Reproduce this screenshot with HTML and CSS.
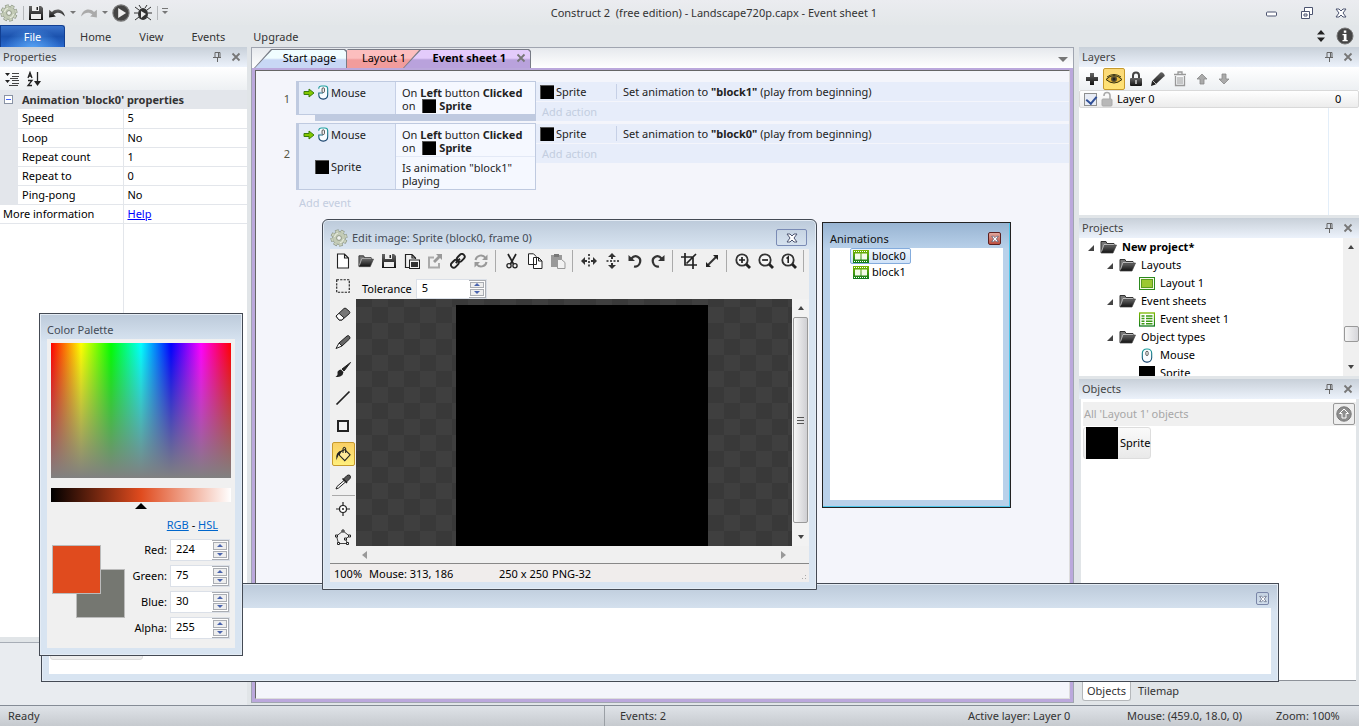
FILE: index.html
```html
<!DOCTYPE html>
<html lang="en">
<head>
<meta charset="utf-8">
<title>Construct 2 - Event sheet 1</title>
<link rel="stylesheet" href="styles.css">
</head>
<body>
<svg class="defs" aria-hidden="true">
  <defs>
    <linearGradient id="dark" x1="0" y1="0" x2="0" y2="1"><stop offset="0" stop-color="#666"/><stop offset="1" stop-color="#111"/></linearGradient>
    <linearGradient id="green" x1="0" y1="0" x2="0" y2="1"><stop offset="0" stop-color="#7ab800"/><stop offset="1" stop-color="#0f7a1c"/></linearGradient>
    <linearGradient id="mouseline" x1="0" y1="0" x2="0" y2="1"><stop offset="0" stop-color="#1fa3a0"/><stop offset="1" stop-color="#173f6b"/></linearGradient>
    <symbol id="gear" viewBox="0 0 18 18"><path d="M9 9m-7 0a7 7 0 1014 0 7 7 0 10-14 0" fill="none" stroke="#7d8675" stroke-width="3" stroke-dasharray="3.500 2"/><circle cx="9" cy="9" r="6.500" fill="#c3cbb6" stroke="#8d9684" stroke-width=".8"/><path d="M9 9m-7 0a7 7 0 1014 0 7 7 0 10-14 0" fill="none" stroke="#c9d1bd" stroke-width="2" stroke-dasharray="3 2.500" stroke-dashoffset="-.2"/><circle cx="9" cy="9" r="2.400" fill="#f2f4f0" stroke="#7d8675" stroke-width=".8"/><path d="M4.500 8q.5-3 3.500-4M13.500 10q-.5 3-3.500 4" stroke="#eef2e6" fill="none"/></symbol>
    <symbol id="save" viewBox="0 0 16 16"><path d="M1 1h12l2 2v12H1z" fill="url(#dark)"/><path d="M4 1h7v5H4zM3 9h10v5H3z" fill="#eee"/><path d="M8.500 2h1.500v3H8.500z" fill="#222"/></symbol>
    <symbol id="undo" viewBox="0 0 16 16"><path d="M1 5v7l6-1-2-1.600C8 7 11 7 15 11 14 5 8 3 3.500 7z" fill="url(#dark)"/></symbol>
    <symbol id="redo" viewBox="0 0 16 16"><path d="M15 5v7l-6-1 2-1.600C8 7 5 7 1 11 2 5 8 3 12.500 7z" fill="#aaa"/></symbol>
    <symbol id="play" viewBox="0 0 16 16"><circle cx="8" cy="8" r="7.200" fill="#444" stroke="#777"/><path d="M5.500 3.500L12.500 8l-7 4.500z" fill="#eee"/></symbol>
    <symbol id="bug" viewBox="0 0 18 18"><path d="M5 6L1 3M13 6l4-3M4 9H0M14 9h4M5 13l-4 3M13 13l4 3M7 4L5 1M11 4l2-3" stroke="#333" fill="none"/><ellipse cx="9" cy="10" rx="5" ry="6" fill="#333"/><path d="M7 7l5 3-5 4z" fill="#eee"/></symbol>
    <symbol id="pin" viewBox="0 0 10 12"><path d="M3 1.500h5v5H3zM1 6.500h8M5.500 7v4M6.500 1.500v5" stroke="#666" fill="none"/></symbol>
    <symbol id="x" viewBox="0 0 10 10"><path d="M1.500 1.500l7 7M8.500 1.500l-7 7" stroke="#777" stroke-width="1.800"/></symbol>
    <symbol id="glyphx" viewBox="0 0 12 10"><path d="M1 1h3l2 2 2-2h3L8 5l3 4H8L6 7 4 9H1l3-4z" fill="#fff" stroke="#4c5470"/></symbol>
    <symbol id="cat" viewBox="0 0 16 16"><path d="M1 2h5L3.500 5zM1 9h5l-2.500 3z" fill="#222"/><path d="M8 2.500h7M8 5.500h7M8 9.500h7M8 12.500h7M5 14.500h9M6 7.500h8" stroke="#444"/></symbol>
    <symbol id="sort" viewBox="0 0 16 16"><path d="M2 7l2-5.500L6 7M2.500 5h3M2 9.500h4l-4 5h4M11.500 1v12" stroke="#222" fill="none" stroke-width="1.300"/><path d="M8 10h7l-3.500 5z" fill="#222"/></symbol>
    <symbol id="mouse" viewBox="0 0 12 16"><rect x="1" y="1" width="10" height="14" rx="4.500" fill="#f9fcff" stroke="url(#mouseline)" stroke-width="1.200"/><rect x="4.800" y="3.500" width="2.400" height="4.500" rx="1.200" fill="#fff" stroke="#333" stroke-width=".9"/></symbol>
    <symbol id="mousesm" viewBox="0 0 12 16"><path d="M1.500 4Q1.500 1 4.500 1H8q3 0 3 3v6.500Q11 15 6.300 15 1.500 15 1.500 10.500V8.500H6" fill="#f9fcff" stroke="url(#mouseline)" stroke-width="1.200"/><rect x="5" y="3" width="2.500" height="5" rx="1.200" fill="#fff" stroke="#333" stroke-width=".9"/></symbol>
    <symbol id="go" viewBox="0 0 12 10"><path d="M1 3.500h5V1l5 4-5 4V6.500H1z" fill="#83c800" stroke="#3a7d0c"/></symbol>
    <symbol id="plus" viewBox="0 0 14 14"><path d="M5 1h4v4h4v4H9v4H5V9H1V5h4z" fill="url(#dark)"/></symbol>
    <symbol id="eye" viewBox="0 0 18 12"><path d="M1 6.500q8-8 16 0-8 7-16 0z" fill="#e7b83b" stroke="#35300f"/><circle cx="9" cy="6" r="3" fill="#5a5030"/><circle cx="9" cy="6" r="1.500" fill="#222"/><path d="M2 4q7-5 14 0" fill="none" stroke="#35300f"/></symbol>
    <symbol id="lock" viewBox="0 0 14 16"><path d="M4 7V4.500a3 3 0 016 0V7" fill="none" stroke="#444" stroke-width="2"/><rect x="1" y="7" width="12" height="8" rx="1" fill="url(#dark)"/><path d="M6.200 9h1.600v4H6.200z" fill="#ccc"/></symbol>
    <symbol id="unlock" viewBox="0 0 12 16"><path d="M3 5V4.500a3 3 0 016 0V8" fill="none" stroke="#aaa" stroke-width="1.600"/><rect x="1" y="8" width="10" height="7" rx="1" fill="#b8b8b8" stroke="#aaa"/></symbol>
    <symbol id="pencil" viewBox="0 0 16 16"><path d="M2 10L10.500 1.500q2-1 3.500 1.500t0 2.500L5.500 13.500 1 15z" fill="url(#dark)"/><path d="M2.500 9.500l4 4" stroke="#ddd" stroke-width=".8"/></symbol>
    <symbol id="trash" viewBox="0 0 14 16"><path d="M1 3.500h12M5 3V1h4v2M2.500 5v9.500h9V5" fill="none" stroke="#999" stroke-width="1.300"/><path d="M5 6v7M7 6v7M9 6v7" stroke="#999"/></symbol>
    <symbol id="arrup" viewBox="0 0 12 12"><path d="M6 1l5 5H8v5H4V6H1z" fill="#aaa" stroke="#888" stroke-width=".8"/></symbol>
    <symbol id="folder" viewBox="0 0 17 14"><path d="M1 12.500V1.500h5l1 2h7V5" fill="#777" stroke="#333"/><path d="M1 13L4 5h12.500L13 13z" fill="url(#dark)" stroke="#444" stroke-width=".7"/><path d="M1.500 11.500L4 4.500h10" fill="none" stroke="#ddd" stroke-width=".7"/></symbol>
    <symbol id="layout" viewBox="0 0 16 13"><rect x=".5" y=".5" width="15" height="12" fill="#f7fbe8" stroke="#2c8a1f"/><rect x="2.500" y="2.500" width="11" height="8" fill="#9bc832" stroke="#5d9c1e"/></symbol>
    <symbol id="sheet" viewBox="0 0 16 14"><rect x=".5" y=".5" width="15" height="13" fill="#fff" stroke="url(#green)" stroke-width="1.300"/><path d="M2.500 2.700h3v1.500h-3zM7 2.700h6.500v1.500H7zM2.500 5.300h3v1.500h-3zM7 5.300h6.500v1.500H7zM2.500 7.900h3v1.500h-3zM7 7.900h6.500v1.500H7zM2.500 10.400h3v1.500h-3zM7 10.400h6.500v1.500H7z" fill="#3c9a15"/></symbol>
    <symbol id="film" viewBox="0 0 16 13"><rect width="16" height="13" fill="url(#green)"/><path d="M2 3.500h5.500v6H2zM8.500 3.500H14v6H8.500z" fill="#f4fbe8"/><path d="M1 1.500h14M1 11.500h14" stroke="#fff" stroke-dasharray="1 1"/></symbol>
    <symbol id="new" viewBox="0 0 16 16"><path d="M2.500 1h7l4 4v10h-11zM9.500 1v4h4" fill="#fff" stroke="#222" stroke-width="1.100"/></symbol>
    <symbol id="copyimg" viewBox="0 0 16 16"><path d="M5 14.500H1.500v-13H8l3.500 3.500V6M8 1.500V5h3.500" fill="none" stroke="#222" stroke-width="1.200"/><rect x="5.500" y="7" width="10" height="8.500" fill="#f5f5f5" stroke="#222"/><rect x="7" y="9" width="7" height="5" fill="#333"/></symbol>
    <symbol id="export" viewBox="0 0 16 16"><path d="M7 4.500H2v10h10V10" fill="none" stroke="#aaa" stroke-width="2"/><path d="M9 1h6v6l-2-2-5 5-2-2 5-5z" fill="#999"/></symbol>
    <symbol id="link" viewBox="0 0 16 16"><g fill="none" stroke="#222" stroke-width="1.900" transform="rotate(-45 8 8)"><rect x="-.5" y="5" width="8.500" height="5.500" rx="2.700"/><rect x="8" y="5" width="8.500" height="5.500" rx="2.700"/><path d="M5 7.800h6"/></g></symbol>
    <symbol id="refresh" viewBox="0 0 16 16"><path d="M2.500 7a5.500 5.500 0 0110-2M13.500 9a5.500 5.500 0 01-10 2" fill="none" stroke="#999" stroke-width="2"/><path d="M14.500 1.500V7H9zM1.500 14.500V9H7z" fill="#999"/></symbol>
    <symbol id="cut" viewBox="0 0 16 16"><path d="M4 1l5.500 10M12 1L6.500 11" stroke="#222" stroke-width="1.700"/><circle cx="5" cy="12.800" r="2.100" fill="none" stroke="#222" stroke-width="1.300"/><circle cx="11" cy="12.800" r="2.100" fill="none" stroke="#222" stroke-width="1.300"/></symbol>
    <symbol id="copy" viewBox="0 0 16 16"><path d="M1.500.800h5l3 3v7.700h-8zM6.500 4.500h5l3.500 3.500v7.500H6.500zM11.500 4.500V8H15" fill="#fff" stroke="#222"/></symbol>
    <symbol id="paste" viewBox="0 0 16 16"><path d="M1 2h11v12H1z" fill="#999"/><path d="M4 1h5v3H4z" fill="#777"/><path d="M7.500 6.500h4l3.500 3v6H7.500z" fill="#f2f2f2" stroke="#999"/></symbol>
    <symbol id="fliph" viewBox="0 0 16 16"><path d="M8 1v14" stroke="#222" stroke-width="1.600" stroke-dasharray="2 1.500"/><path d="M0 8l4-4v3h2v2H4v3zM16 8l-4-4v3h-2v2h2v3z" fill="#333"/></symbol>
    <symbol id="rotl" viewBox="0 0 16 16"><path d="M4.500 5.500C8 1 14.500 4 13 9.500c-.8 3-3.500 4.500-6 4" fill="none" stroke="#333" stroke-width="2.200"/><path d="M1.500 2v6H8z" fill="#333"/></symbol>
    <symbol id="crop" viewBox="0 0 16 16"><path d="M4 0v12h12M0 4h12v12M5.500 10.500L15 1" fill="none" stroke="#222" stroke-width="1.700"/></symbol>
    <symbol id="resize" viewBox="0 0 16 16"><path d="M4 12l8-8" stroke="#333" stroke-width="2"/><path d="M9 2h5v5zM2 9v5h5z" fill="#222"/></symbol>
    <symbol id="zoom" viewBox="0 0 16 16"><circle cx="7" cy="7" r="5.700" fill="#f6f6f6" stroke="#333" stroke-width="1.800"/><path d="M11 11l4 4" stroke="#222" stroke-width="2.800"/></symbol>
    <symbol id="select" viewBox="0 0 14 14"><rect x="1.500" y="1.500" width="11" height="11" fill="none" stroke="#222" stroke-dasharray="2 1"/></symbol>
    <symbol id="eraser" viewBox="0 0 16 16"><path d="M1 10l8-7.500q1-.7 2 0l3.500 3q.7 1 0 2L7 14H4z" fill="#777" stroke="#222"/><path d="M1 10l3-2.700 5 4.500L7 14H4z" fill="#fff" stroke="#222"/></symbol>
    <symbol id="pencil2" viewBox="0 0 16 16"><path d="M4 9L12 2q1.500-1 2.500.5t0 2.500L7 12z" fill="#666" stroke="#222"/><path d="M4 9l3 3-6 2.500z" fill="#fff" stroke="#222"/></symbol>
    <symbol id="brush" viewBox="0 0 16 16"><path d="M15.500.5L7 7l2 2z" fill="#222" stroke="#222"/><path d="M6 7.500l2.500 2.500-1 3Q4 16 .5 14.500q2.500-1 2-3.500T6 7.500z" fill="#222"/></symbol>
    <symbol id="line" viewBox="0 0 16 16"><path d="M1.500 14.500l13-13" stroke="#222" stroke-width="1.700"/></symbol>
    <symbol id="rect" viewBox="0 0 16 16"><rect x="3" y="3" width="10" height="10" fill="none" stroke="#222" stroke-width="2"/></symbol>
    <symbol id="bucket" viewBox="0 0 18 18"><path d="M5 7l6-3 6 6-6 6.500-6-6z" fill="#ffe99a" stroke="#222" stroke-width="1.200"/><path d="M9 8V3q1.500-3 3 0v5" fill="none" stroke="#222" stroke-width="1.200"/><path d="M1.500 16Q0 6 8 5L5.500 9.500 4 10z" fill="#222"/></symbol>
    <symbol id="picker" viewBox="0 0 16 16"><path d="M8.500 5l3.500-3.500q2-1 3 0t0 3L11.500 8z" fill="#555" stroke="#222"/><path d="M9 6.500L2 12.500l-1 2.500 2.500-1L10.500 8" fill="#fff" stroke="#222"/><path d="M7.500 4.500l4.500 4.500" stroke="#222" stroke-width="1.500"/></symbol>
    <symbol id="origin" viewBox="0 0 16 16"><circle cx="8" cy="8" r="3.500" fill="#fff" stroke="#222" stroke-width="1.200"/><path d="M8 1v4M8 11v4M1 8h4M11 8h4" stroke="#222" stroke-width="1.200"/><circle cx="8" cy="8" r="1" fill="#222"/></symbol>
    <symbol id="poly" viewBox="0 0 16 16"><path d="M1.500 7L8 2l6.500 5-4 3 2 4.500h-9z" fill="none" stroke="#444"/><g fill="#fff" stroke="#222"><path d="M.5 6h2v2h-2zM7 1h2v2H7zM13.500 6h2v2h-2zM9.500 9h2v2h-2zM2.500 13.500h2v2h-2zM11.500 13.500h2v2h-2z"/></g></symbol>
    <symbol id="info" viewBox="0 0 18 18"><circle cx="9" cy="9" r="8" fill="#444" stroke="#777"/><path d="M7.800 3.500h2.500v2.300H7.800zM6.500 7h4v6h1.200v1.200H6.500V13h1.300V8.300H6.500z" fill="#fff"/></symbol>
    <symbol id="upcirc" viewBox="0 0 16 16"><circle cx="8" cy="8" r="7.200" fill="#8e8e8e" stroke="#777"/><path d="M8 3l4.500 4.500H10V12H6V7.500H3.500z" fill="none" stroke="#fff"/></symbol>
  </defs>
</svg>

<div class="app">
  <header class="titlebar">
    <nav class="quick" aria-label="Quick access">
      <svg class="i18"><use href="#gear"/></svg><span class="vsep"></span>
      <button class="flat" aria-label="Save"><svg class="i16"><use href="#save"/></svg></button>
      <button class="flat" aria-label="Undo"><svg class="i18"><use href="#undo"/></svg></button><span class="caret"></span>
      <button class="flat" aria-label="Redo"><svg class="i18"><use href="#redo"/></svg></button><span class="caret"></span>
      <button class="flat" aria-label="Run layout"><svg class="i18"><use href="#play"/></svg></button>
      <button class="flat" aria-label="Debug layout"><svg class="i18"><use href="#bug"/></svg></button><span class="vsep"></span><span class="caret lined"></span>
    </nav>
    <h1 class="apptitle">Construct 2&nbsp; (free edition) - Landscape720p.capx - Event sheet 1</h1>
    <div class="wincontrols">
      <button class="flat" aria-label="Minimize"><svg class="i14" viewBox="0 0 14 14"><rect x="1.500" y="6" width="10" height="4" rx="1" fill="#fff" stroke="#4c5470"/></svg></button>
      <button class="flat" aria-label="Restore"><svg class="i14" viewBox="0 0 14 14"><path d="M4.500 1.500h8v7h-8z" fill="#fff" stroke="#4c5470"/><path d="M1.500 5.500h8v7h-8z" fill="#fff" stroke="#4c5470"/><path d="M4 8h3v2H4z" fill="none" stroke="#4c5470"/></svg></button>
      <button class="flat" aria-label="Close"><svg class="i12"><use href="#glyphx"/></svg></button>
    </div>
  </header>
  <nav class="ribbon">
    <button class="file">File</button>
    <button class="rtab">Home</button><button class="rtab">View</button><button class="rtab">Events</button><button class="rtab">Upgrade</button>
    <div class="ribbonend"><svg width="10" height="14" viewBox="0 0 10 14"><path d="M1 5.500L5 1l4 4.500zM1 8.500L5 13l4-4.500z" fill="#222"/></svg><button class="flat" aria-label="About"><svg class="i18"><use href="#info"/></svg></button></div>
  </nav>

  <main class="workspace">
    <aside class="left">
      <section class="props">
        <header class="panelhead"><h2>Properties</h2><svg class="pin"><use href="#pin"/></svg><button class="flat" aria-label="Close Properties"><svg class="i10"><use href="#x"/></svg></button></header>
        <div class="tools proptools"><button class="flat" aria-label="Categorized"><svg class="i16"><use href="#cat"/></svg></button><button class="flat" aria-label="Sort"><svg class="i16"><use href="#sort"/></svg></button></div>
        <table class="proptable">
          <colgroup><col class="c1"><col class="c2"><col></colgroup>
          <thead><tr><th colspan="3"><span class="minus"></span>Animation 'block0' properties</th></tr></thead>
          <tbody>
            <tr><td class="gut"></td><td>Speed</td><td class="v">5</td></tr>
            <tr><td class="gut"></td><td>Loop</td><td class="v">No</td></tr>
            <tr><td class="gut"></td><td>Repeat count</td><td class="v">1</td></tr>
            <tr><td class="gut"></td><td>Repeat to</td><td class="v">0</td></tr>
            <tr><td class="gut"></td><td>Ping-pong</td><td class="v">No</td></tr>
            <tr><td class="more" colspan="2">More information</td><td class="v"><a href="#help">Help</a></td></tr>
          </tbody>
        </table>
        <div class="propfill"></div>
      </section>
      <div class="propdesc"></div>
    </aside>

    <section class="center">
      <div class="tabs">
        <button class="tab start"><span>Start page</span></button>
        <button class="tab layout"><span>Layout 1</span></button>
        <button class="tab sheet"><span>Event sheet 1</span><svg class="i10"><use href="#x"/></svg></button>
        <span class="caret tabmenu"></span>
      </div>
      <div class="sheetframe"><div class="sheetbody">
        <div class="event">
          <div class="num">1</div>
          <div class="conds">
            <div class="block">
              <div class="cond"><div class="obj"><svg class="go"><use href="#go"/></svg><svg class="mouse"><use href="#mousesm"/></svg>Mouse</div><div class="desc">On <b>Left</b> button <b>Clicked</b><br>on <i class="sq"></i><b>Sprite</b></div></div>
            </div>
            <div class="foot"></div>
          </div>
          <div class="acts">
            <div class="act"><div class="aobj"><i class="sq"></i>Sprite</div><div class="adesc">Set animation to <b>"block1"</b> (play from beginning)</div></div>
            <div class="addact">Add action</div>
          </div>
        </div>
        <div class="event">
          <div class="num">2</div>
          <div class="conds">
            <div class="block">
              <div class="cond"><div class="obj"><svg class="go"><use href="#go"/></svg><svg class="mouse"><use href="#mousesm"/></svg>Mouse</div><div class="desc">On <b>Left</b> button <b>Clicked</b><br>on <i class="sq"></i><b>Sprite</b></div></div>
              <div class="cond"><div class="obj sp"><i class="sq"></i>Sprite</div><div class="desc">Is animation "block1"<br>playing</div></div>
            </div>
          </div>
          <div class="acts">
            <div class="act"><div class="aobj"><i class="sq"></i>Sprite</div><div class="adesc">Set animation to <b>"block0"</b> (play from beginning)</div></div>
            <div class="addact">Add action</div>
          </div>
        </div>
        <div class="addevent">Add event</div>
      </div></div>
    </section>

    <aside class="right">
      <section class="layers">
        <header class="panelhead"><h2>Layers</h2><svg class="pin"><use href="#pin"/></svg><button class="flat" aria-label="Close Layers"><svg class="i10"><use href="#x"/></svg></button></header>
        <div class="tools layertools">
          <button class="flat" aria-label="Add layer"><svg class="i14"><use href="#plus"/></svg></button>
          <button class="flat on" aria-label="Toggle visible"><svg width="18" height="12"><use href="#eye"/></svg></button>
          <button class="flat" aria-label="Lock"><svg width="14" height="16"><use href="#lock"/></svg></button>
          <button class="flat" aria-label="Rename"><svg class="i16"><use href="#pencil"/></svg></button>
          <button class="flat" aria-label="Delete"><svg width="14" height="16"><use href="#trash"/></svg></button>
          <button class="flat" aria-label="Move up"><svg class="i12"><use href="#arrup"/></svg></button>
          <button class="flat" aria-label="Move down"><svg class="i12 flip"><use href="#arrup"/></svg></button>
        </div>
        <div class="layer"><input type="checkbox" id="l0" checked><svg width="12" height="16"><use href="#unlock"/></svg><label for="l0">Layer 0</label><span class="lnum">0</span></div>
        <div class="layerfill"></div>
      </section>
      <section class="projects">
        <header class="panelhead"><h2>Projects</h2><svg class="pin"><use href="#pin"/></svg><button class="flat" aria-label="Close Projects"><svg class="i10"><use href="#x"/></svg></button></header>
        <div class="treebox">
          <ul class="tree">
            <li class="d0"><i class="open"></i><svg class="fold"><use href="#folder"/></svg><b>New project*</b></li>
            <li class="d1"><i class="open"></i><svg class="fold"><use href="#folder"/></svg>Layouts</li>
            <li class="d2"><svg class="leaf"><use href="#layout"/></svg>Layout 1</li>
            <li class="d1"><i class="open"></i><svg class="fold"><use href="#folder"/></svg>Event sheets</li>
            <li class="d2"><svg class="leaf"><use href="#sheet"/></svg>Event sheet 1</li>
            <li class="d1"><i class="open"></i><svg class="fold"><use href="#folder"/></svg>Object types</li>
            <li class="d2"><svg class="leaf"><use href="#mouse"/></svg>Mouse</li>
            <li class="d2"><i class="leaf black"></i>Sprite</li>
          </ul>
          <div class="vscroll"><i class="up"></i><i class="knob"></i><i class="down"></i></div>
        </div>
      </section>
      <section class="objects">
        <header class="panelhead"><h2>Objects</h2><svg class="pin"><use href="#pin"/></svg><button class="flat" aria-label="Close Objects"><svg class="i10"><use href="#x"/></svg></button></header>
        <div class="objbody">
          <div class="filter"><span>All 'Layout 1' objects</span><button class="upbtn" aria-label="Up one level"><svg class="i16"><use href="#upcirc"/></svg></button></div>
          <button class="objitem"><i></i>Sprite</button>
        </div>
        <div class="btabs"><button class="active">Objects</button><button>Tilemap</button></div>
      </section>
    </aside>
  </main>

  <footer class="status"><span class="ready">Ready</span><span class="events">Events: 2</span><span>Active layer: Layer 0</span><span>Mouse: (459.0, 18.0, 0)</span><span>Zoom: 100%</span></footer>
</div>

<section class="win framewin" aria-label="Animation frames">
  <div class="wtitle"><h2></h2><button class="wx" aria-label="Close"><svg class="i8"><use href="#glyphx"/></svg></button></div>
  <div class="wbody"><i class="frameitem"></i></div>
</section>

<section class="win palette">
  <div class="wtitle"><h2>Color Palette</h2></div>
  <div class="wbody">
    <div class="spectrum"></div>
    <div class="ramp"></div><i class="marker"></i>
    <div class="modes"><a href="#rgb">RGB</a> - <a href="#hsl">HSL</a></div>
    <div class="mix">
      <div class="swatches"><i class="back"></i><i class="fore"></i></div>
      <div class="channels">
        <label for="r">Red:</label><div class="spin"><input id="r" type="text" value="224"><span><button aria-label="Red up"></button><button aria-label="Red down"></button></span></div>
        <label for="g">Green:</label><div class="spin"><input id="g" type="text" value="75"><span><button aria-label="Green up"></button><button aria-label="Green down"></button></span></div>
        <label for="b">Blue:</label><div class="spin"><input id="b" type="text" value="30"><span><button aria-label="Blue up"></button><button aria-label="Blue down"></button></span></div>
        <label for="a">Alpha:</label><div class="spin"><input id="a" type="text" value="255"><span><button aria-label="Alpha up"></button><button aria-label="Alpha down"></button></span></div>
      </div>
    </div>
  </div>
</section>

<section class="win editor">
  <div class="wtitle"><svg class="i18"><use href="#gear"/></svg><h2>Edit image: Sprite (block0, frame 0)</h2><button class="wide" aria-label="Close"><svg class="i12"><use href="#glyphx"/></svg></button></div>
  <div class="wbody">
    <div class="etools">
      <button aria-label="New"><svg><use href="#new"/></svg></button><button aria-label="Open"><svg><use href="#folder"/></svg></button><button aria-label="Save"><svg><use href="#save"/></svg></button><button aria-label="Save all"><svg><use href="#copyimg"/></svg></button><button aria-label="Export"><svg><use href="#export"/></svg></button><button aria-label="Link"><svg><use href="#link"/></svg></button><button aria-label="Reload"><svg><use href="#refresh"/></svg></button><i></i>
      <button aria-label="Cut"><svg><use href="#cut"/></svg></button><button aria-label="Copy"><svg><use href="#copy"/></svg></button><button aria-label="Paste"><svg><use href="#paste"/></svg></button><i></i>
      <button aria-label="Mirror"><svg><use href="#fliph"/></svg></button><button aria-label="Flip"><svg class="quarter"><use href="#fliph"/></svg></button><button aria-label="Rotate left"><svg><use href="#rotl"/></svg></button><button aria-label="Rotate right"><svg class="mirror"><use href="#rotl"/></svg></button><i></i>
      <button aria-label="Crop"><svg><use href="#crop"/></svg></button><button aria-label="Resize"><svg><use href="#resize"/></svg></button><i></i>
      <button aria-label="Zoom in"><svg viewBox="0 0 16 16"><use href="#zoom"/><path d="M4 7h6M7 4v6" stroke="#222" stroke-width="1.700"/></svg></button><button aria-label="Zoom out"><svg viewBox="0 0 16 16"><use href="#zoom"/><path d="M4 7h6" stroke="#222" stroke-width="1.700"/></svg></button><button aria-label="Actual size"><svg viewBox="0 0 16 16"><use href="#zoom"/><path d="M5.500 5.500L7.200 4v6" fill="none" stroke="#222" stroke-width="1.600"/></svg></button><i></i>
    </div>
    <div class="emain">
      <div class="side">
        <button aria-label="Select"><svg><use href="#select"/></svg></button><button aria-label="Eraser"><svg><use href="#eraser"/></svg></button><button aria-label="Pencil"><svg><use href="#pencil2"/></svg></button><button aria-label="Brush"><svg><use href="#brush"/></svg></button><button aria-label="Line"><svg><use href="#line"/></svg></button><button aria-label="Rectangle"><svg><use href="#rect"/></svg></button><button class="on" aria-label="Fill"><svg><use href="#bucket"/></svg></button><button aria-label="Colour picker"><svg><use href="#picker"/></svg></button><i></i><button aria-label="Origin"><svg><use href="#origin"/></svg></button><button aria-label="Collision polygon"><svg><use href="#poly"/></svg></button>
      </div>
      <div class="ework">
        <div class="opts"><label for="tol">Tolerance</label><div class="spin"><input id="tol" type="text" value="5"><span><button aria-label="Tolerance up"></button><button aria-label="Tolerance down"></button></span></div></div>
        <div class="view">
          <div class="canvas"><div class="image"></div></div>
          <div class="vscroll"><i class="up"></i><i class="knob"></i><i class="down"></i></div>
        </div>
        <div class="hscroll"><i class="lt"></i><i class="rt"></i></div>
      </div>
    </div>
    <div class="estatus"><span class="s1">100%</span><span class="s2">Mouse: 313, 186</span><span class="s3">250 x 250</span><span>PNG-32</span><i class="grip"></i></div>
  </div>
</section>

<section class="win anims">
  <div class="wtitle"><h2>Animations</h2><button class="wx red" aria-label="Close"><svg class="i8"><use href="#glyphx"/></svg></button></div>
  <div class="wbody"><ul>
    <li class="sel"><svg width="16" height="13"><use href="#film"/></svg>block0</li>
    <li><svg width="16" height="13"><use href="#film"/></svg>block1</li>
  </ul></div>
</section>
</body>
</html>
```
FILE: styles.css
```css
* { box-sizing: border-box; }
html, body { height: 100%; }
body {
  margin: 0;
  overflow: hidden;
  font: 11px/14px "Noto Sans", "Open Sans", sans-serif;
  color: #000;
  background: #e1e5e8;
}
h1, h2 { margin: 0; font: inherit; }
ul { margin: 0; padding: 0; list-style: none; }
button, input { font: inherit; color: inherit; }
button { padding: 0; border: 0; background: none; }
svg { display: block; flex: none; }
.defs { position: absolute; width: 0; height: 0; }
.i8 { width: 8px; height: 8px; }
.i10 { width: 10px; height: 10px; }
.i12 { width: 12px; height: 12px; }
.i14 { width: 14px; height: 14px; }
.i16 { width: 16px; height: 16px; }
.i18 { width: 18px; height: 18px; }
.flip { transform: rotate(180deg); }
.mirror { transform: scaleX(-1); }
.quarter { transform: rotate(90deg); }
.flat { display: flex; align-items: center; justify-content: center; }
.app { display: flex; flex-direction: column; height: 100vh; }

/* title bar and ribbon */
.titlebar {
  display: grid;
  grid-template-columns: 8fr auto 7fr;
  align-items: center;
  height: 25px;
  background: linear-gradient(#ebecf0, #e3e7e9);
}
.quick { display: flex; align-items: center; gap: 4px; height: 24px; }
.vsep { width: 1px; height: 14px; margin-left: 1px; background: #b5b8bb; }
.caret { width: 0; height: 0; border: 3px solid transparent; border-top-color: #777; border-bottom: 0; }
.caret.lined { position: relative; }
.caret.lined::before { content: ""; position: absolute; left: -3px; top: -6px; width: 6px; height: 1px; background: #777; }
.apptitle { color: #333; }
.wincontrols { display: flex; justify-content: flex-end; gap: 21px; padding-right: 12px; }
.ribbon { display: flex; align-items: stretch; height: 22px; background: #e2e6e9; color: #333; }
.file {
  width: 65px;
  margin-right: 15px;
  border: 1px solid #123f92;
  border-bottom: 0;
  border-radius: 0 3px 0 0;
  color: #fff;
  background: radial-gradient(ellipse at 50% 110%, #58a4f4, transparent 65%), linear-gradient(#3a73cb, #1b52ae 50%, #2a6ace);
}
.rtab { margin-right: 28px; padding-top: 2px; }
.ribbonend { display: flex; align-items: center; gap: 10px; margin-left: auto; padding-right: 5px; }

/* docked panels */
.workspace { display: flex; flex: 1; min-height: 0; }
.left { display: flex; flex-direction: column; width: 247px; }
.props { display: flex; flex-direction: column; flex: 1; background: #fff; }
.panelhead {
  display: flex;
  align-items: center;
  gap: 9px;
  height: 20px;
  flex: none;
  padding: 0 6px 0 3px;
  color: #444;
  background: linear-gradient(#c8d0d9, #ecf2fb);
}
.panelhead h2 { flex: 1; }
.pin { width: 10px; height: 12px; }
.tools { display: flex; align-items: center; height: 23px; flex: none; background: linear-gradient(#fff, #edf0f3); }
.proptools { gap: 6px; padding-left: 4px; }
.proptable { width: 100%; border-collapse: collapse; table-layout: fixed; }
.c1 { width: 18px; }
.c2 { width: 105px; }
.proptable th {
  height: 19px;
  padding: 0;
  text-align: left;
  color: #333;
  background: #e3e6eb;
}
.minus {
  display: inline-block;
  width: 9px;
  height: 9px;
  margin: 0 9px 0 4px;
  border: 1px solid #8a93a5;
  background: linear-gradient(#46f, #46f) center / 5px 1px no-repeat #fff;
}
.proptable td { height: 19px; padding: 0 3px 0 4px; border-bottom: 1px solid #e3e6eb; }
.proptable td.gut { padding: 0; background: #e3e6eb; }
.proptable td.v { border-left: 1px solid #e3e6eb; }
.proptable td.more { padding-left: 3px; }
.proptable a { color: #00f; }
.propfill { flex: 1; width: 124px; border-right: 1px solid #e3e6eb; }
.propdesc { height: 68px; border-top: 5px solid #e1e5e8; background: #e9ecf0; box-shadow: inset 0 1px #a7adb6; }

/* event sheet */
.center {
  display: flex;
  flex-direction: column;
  flex: 1;
  min-width: 0;
  margin: 0 5px 2px 4px;
  border: 1px solid #a0a5b0;
}
.tabs { display: flex; align-items: flex-end; height: 20px; flex: none; padding: 0 5px 0 2px; background: linear-gradient(#e6e9ed, #fff); }
.tab {
  position: relative;
  height: 19px;
  margin-right: -1px;
  padding-bottom: 2px;
  background: #777b85;
  clip-path: polygon(0 100%, 17px 0, calc(100% - 2px) 0, 100% 2px, 100% 100%);
}
.tab::before {
  content: "";
  position: absolute;
  inset: 1px 1px 0;
  clip-path: polygon(0 100%, 17px 0, calc(100% - 2px) 0, 100% 2px, 100% 100%);
}
.tab > * { position: relative; }
.tab.start { width: 93px; padding-left: 18px; }
.tab.start::before { background: linear-gradient(#f0fdff 45%, #c8d7f5 55%); }
.tab.layout { width: 74px; padding: 0 0 2px 2px; clip-path: polygon(0 100%, 0 2px, 2px 0, 100% 0, 100% 100%); }
.tab.layout::before { background: linear-gradient(#fcbebe 45%, #f19c9c 55%); clip-path: none; }
.tab.sheet { display: flex; align-items: center; justify-content: flex-end; gap: 10px; width: 128px; margin-left: -16px; padding-right: 5px; font-weight: bold; z-index: 1; }
.tab.sheet::before { background: linear-gradient(#e3cbfb 45%, #b9a2dc 55%); }
.tabmenu { margin: 0 0 6px auto; border-width: 5px 5px 0; }
.sheetframe { flex: 1; border: 3px solid #bba8dc; border-top-width: 2px; }
.sheetbody { height: 100%; padding-top: 10px; border: 1px solid #666; border-right-color: #ddd; border-bottom-color: #ddd; background: #f4f5fb; color: #222; line-height: 13px; }
.event { display: flex; margin-bottom: 2px; }
.num { display: flex; align-items: center; justify-content: flex-end; width: 40px; padding: 0 6px 6px 0; color: #554; }
.conds { width: 240px; flex: none; }
.block { border: 1px solid #bfcae0; border-left-width: 3px; background: #f5f8ff; }
.foot { height: 6px; margin-left: 19px; background: #bfcae0; }
.cond { display: flex; min-height: 32px; }
.obj { display: flex; align-items: flex-start; gap: 2px; width: 97px; padding: 4px 0 0 4px; border-right: 1px solid #c6d0e6; background: #e5ecf9; }
.obj.sp { padding-left: 16px; }
.go { width: 12px; height: 10px; margin-top: 2px; }
.mouse { width: 12px; height: 15px; margin-top: -1px; }
.desc { flex: 1; padding: 4px 0 2px 6px; }
.cond + .cond .desc { border-top: 1px solid #e3e9f6; }
.sq { display: inline-block; width: 14px; height: 14px; flex: none; background: #000; border: 1px solid #555; border-width: 1px 0 0 1px; }
.desc .sq { margin: -2px 3px -3px 4px; }
.acts { flex: 1; }
.act { display: flex; align-items: center; height: 19px; margin-top: 1px; padding-left: 4px; background: #e7edfa; }
.aobj { display: flex; align-items: center; gap: 2px; width: 77px; height: 15px; border-right: 1px solid #c6d0e6; }
.adesc { padding-left: 6px; }
.addact { height: 19px; margin-top: 1px; padding: 3px 6px; color: #c3cde0; background: #e7edfa; }
.addevent { padding: 4px 43px; color: #c3cde0; }

/* right column */
.right { display: flex; flex-direction: column; width: 280px; gap: 3px; }
.layers { display: flex; flex-direction: column; height: 168px; background: #fff; }
.layertools { padding-left: 2px; }
.layertools .flat { width: 22px; height: 22px; border: 1px solid transparent; border-radius: 2px; }
.layertools .on { border-color: #c79a2c; background: linear-gradient(#fbd978, #ffe375); }
.layer { display: flex; align-items: center; gap: 4px; height: 18px; padding-left: 4px; border: 1px solid #d9d9d9; border-radius: 2px; background: linear-gradient(#fff, #ececec); }
.layer input { appearance: none; width: 13px; height: 13px; margin: 0; border: 1px solid #8e8f8f; background: #e8ecf5; position: relative; }
.layer input::after { content: ""; position: absolute; left: 3px; top: 0; width: 5px; height: 8px; border: solid #304f96; border-width: 0 2px 2px 0; transform: rotate(40deg); }
.lnum { width: 23px; margin-left: auto; }
.layerfill { flex: 1; margin-right: 30px; border-right: 1px solid #e3eef9; }
.projects { height: 158px; }
.treebox { display: flex; height: 138px; overflow: hidden; background: #fff; }
.tree { flex: 1; }
.tree li { display: flex; align-items: center; height: 18px; }
.d0 { padding-left: 9px; }
.d1 { padding-left: 28px; }
.d2 { padding-left: 60px; }
.open { width: 0; height: 0; margin: 2px 6px 0 0; border-left: 6px solid transparent; border-bottom: 6px solid #444; }
.fold { width: 17px; height: 14px; margin-right: 5px; }
.leaf { width: 16px; height: 15px; margin-right: 5px; }
.black { background: #000; }
.vscroll { display: flex; flex-direction: column; align-items: center; width: 16px; background: #f0f0f0; }
.up, .down { width: 0; height: 0; margin: 7px 0; border: 3px solid transparent; }
.up { border-bottom: 4px solid #444; border-top: 0; }
.down { border-top: 4px solid #444; border-bottom: 0; }
.knob { width: 15px; border: 1px solid #999; border-radius: 2px; background: linear-gradient(90deg, #f6f6f6, #d6d6da); }
.projects .knob { height: 16px; margin: auto 0 16px; }
.objects { display: flex; flex-direction: column; flex: 1; }
.objbody { flex: 1; margin-right: 3px; margin-left: 2px; padding: 3px 0 0 2px; border-bottom: 1px solid #8d9299; background: #fff; }
.filter { display: flex; align-items: center; justify-content: space-between; height: 24px; padding: 0 1px; color: #a7a7a7; background: #f0f0f0; }
.upbtn { display: flex; align-items: center; justify-content: center; width: 22px; height: 22px; border: 1px solid #999; border-radius: 2px; background: #eee; }
.objitem { display: flex; align-items: center; gap: 2px; height: 32px; margin-top: 1px; padding-left: 2px; border: 1px solid #ddd; border-radius: 3px; background: linear-gradient(#fafafa, #e9e9e9); }
.objitem i { width: 32px; height: 32px; background: #000; }
.btabs { display: flex; align-items: flex-start; gap: 3px; height: 24px; padding-left: 3px; color: #333; }
.btabs button { height: 20px; padding: 0 4px; }
.btabs .active { border: 1px solid #b5b8bb; border-top: 0; border-radius: 0 0 3px 3px; background: #fff; }

/* status bar */
.status { display: grid; grid-template-columns: 605fr 363fr 159fr 149fr 83fr; align-items: center; height: 21px; border-top: 1px solid #858c96; color: #333; background: linear-gradient(#dfe3e8, #c6cacf); }
.ready { align-self: stretch; padding: 3px 8px; border-right: 1px solid #9a9fa5; }
.events { padding-left: 15px; }

/* floating windows */
.win { position: absolute; display: flex; flex-direction: column; padding: 0 7px 7px; border: 1px solid #444a54; background: linear-gradient(#bccada, #d8e4f1 28px); box-shadow: inset 0 0 0 1px #e4ecf5; }
.wtitle { display: flex; align-items: center; gap: 4px; height: 25px; flex: none; color: #444b56; }
.wtitle h2 { flex: 1; }
.win .wbody { display: flex; flex-direction: column; flex: 1; min-height: 0; background: #f0f0f0; }
.wx { display: flex; align-items: center; justify-content: center; width: 13px; height: 13px; border: 1px solid #7a86a8; border-radius: 2px; }
.framewin { left: 41px; top: 583px; width: 1238px; height: 99px; }
.framewin .wbody { background: #fff; justify-content: flex-end; }
.framewin .wtitle { height: 24px; padding: 5px 2px 0 0; }
.frameitem { width: 93px; height: 40px; margin: 0 0 14px 1px; border: 1px solid #ddd; border-radius: 3px; background: #eee; }

.palette { left: 39px; top: 313px; width: 204px; height: 343px; }
.palette .wtitle { padding-top: 6px; }
.palette .wbody { padding: 4px; }
.spectrum { height: 135px; background: linear-gradient(rgba(128,128,128,0), #808080), linear-gradient(90deg, red, #ff0, lime, cyan, blue, magenta, red); }
.ramp { height: 14px; margin-top: 10px; background: linear-gradient(90deg, #000, #e04b1e, #fff); }
.marker { align-self: center; margin-top: 1px; border: 6px solid transparent; border-top: 0; border-bottom-color: #000; }
.modes { margin-top: 9px; padding-right: 13px; text-align: right; }
.modes a { color: #06c; }
.mix { display: flex; justify-content: space-between; margin-top: 7px; padding-right: 1px; }
.swatches { position: relative; width: 74px; height: 74px; margin-top: 6px; }
.swatches i { position: absolute; width: 49px; height: 49px; border: 1px solid #bbb; }
.fore { left: 1px; top: 0; background: #e04b1e; }
.back { left: 25px; top: 24px; background: #757771; }
.channels { display: grid; grid-template-columns: auto 60px; gap: 4px 3px; align-items: center; text-align: right; }
.spin { display: flex; height: 22px; border: 1px solid #dbe0e8; background: #fff; }
.spin input { width: 100%; min-width: 0; padding: 0 0 2px 5px; border: 0; outline: 0; background: none; }
.spin span { display: flex; flex-direction: column; gap: 1px; width: 17px; flex: none; padding: 1px; border: 1px solid #aaadb3; border-left: 0; background: #fff; }
.spin button { display: flex; align-items: center; justify-content: center; flex: 1; border: 1px solid #aaadb3; background: #eee; }
.spin button::before { content: ""; border: 3px solid transparent; border-top: 0; border-bottom-color: #4a64ae; }
.spin button:last-child::before { transform: rotate(180deg); }

.editor { left: 322px; top: 219px; width: 495px; height: 371px; border-radius: 6px 6px 0 0; }
.editor .wtitle { height: 29px; padding: 6px 2px 0 0; }
.wide { display: flex; align-items: center; justify-content: center; width: 31px; height: 17px; border: 1px solid #7a8bb5; border-radius: 2px; }
.etools { display: flex; align-items: center; height: 24px; flex: none; padding-left: 1px; }
.etools button, .side button { display: flex; align-items: center; justify-content: center; width: 23px; height: 24px; flex: none; }
.etools svg, .side svg { width: 16px; height: 16px; }
.etools i { width: 1px; height: 22px; margin: 0 4px 0 3px; flex: none; background: #aaa; }
.emain { display: flex; flex: 1; min-height: 0; }
.side { display: flex; flex-direction: column; align-items: center; gap: 4px; width: 26px; padding-top: 1px; }
.side .on { border: 1px solid #c79a2c; border-radius: 2px; background: linear-gradient(#f9cf64, #ffef7c); }
.side > i { width: 23px; height: 1px; margin: -3px 0; flex: none; background: #aaa; }
.ework { display: flex; flex-direction: column; flex: 1; }
.opts { display: flex; align-items: center; gap: 4px; height: 26px; padding: 5px 0 0 6px; }
.opts .spin { width: 71px; height: 20px; }
.view { display: flex; flex: 1; }
.canvas { flex: 1; padding: 6px 84px 0 100px; background: conic-gradient(#393939 25%, #3f3f3f 0 50%, #393939 0 75%, #3f3f3f 0) 0 8px / 32px 32px; }
.image { height: 100%; background: #000; }
.view .vscroll { width: 17px; background: #f2f2f2; }
.view .knob { flex: 1; background: linear-gradient(#555, #555) center 99px / 7px 1px no-repeat, linear-gradient(#555, #555) center 102px / 7px 1px no-repeat, linear-gradient(#555, #555) center 105px / 7px 1px no-repeat, linear-gradient(90deg, #f6f6f6, #cfcfd3); }
.view .down { margin-top: 12px; }
.hscroll { display: flex; align-items: center; justify-content: space-between; height: 17px; padding: 0 23px 0 6px; }
.lt, .rt { border: 4px solid transparent; }
.lt { border-left: 0; border-right: 5px solid #999; }
.rt { border-right: 0; border-left: 5px solid #999; }
.estatus { display: flex; height: 19px; flex: none; padding: 3px 1px 0 4px; border-top: 1px solid #888; background: #f0edec; }
.s1 { width: 35px; }
.s2 { width: 130px; }
.s3 { width: 53px; }
.grip { width: 10px; height: 10px; margin: 4px 0 0 auto; background: radial-gradient(circle, #aaa 1px, transparent 1px) 0 0 / 3px 3px; clip-path: polygon(100% 0, 100% 100%, 0 100%); }

.anims { left: 822px; top: 222px; width: 189px; height: 286px; border-color: #222; background: linear-gradient(#98b4d2, #b9d1ea 26px); box-shadow: inset -1px -1px #4fc6ea; }
.anims .wtitle { padding: 6px 2px 0 0; color: #111; }
.anims .wbody { background: #fff; }
.anims .red { border-color: #5c1f1f; background: linear-gradient(#e0a79e, #bf5040); }
.anims ul { display: flex; flex-direction: column; align-items: flex-start; padding-left: 20px; }
.anims li { display: flex; align-items: center; gap: 3px; height: 16px; padding: 0 4px 0 2px; border: 1px solid transparent; }
.anims .sel { border-color: #84acdd; border-radius: 2px; background: linear-gradient(#eef5fd, #cfe2f8); }
```
